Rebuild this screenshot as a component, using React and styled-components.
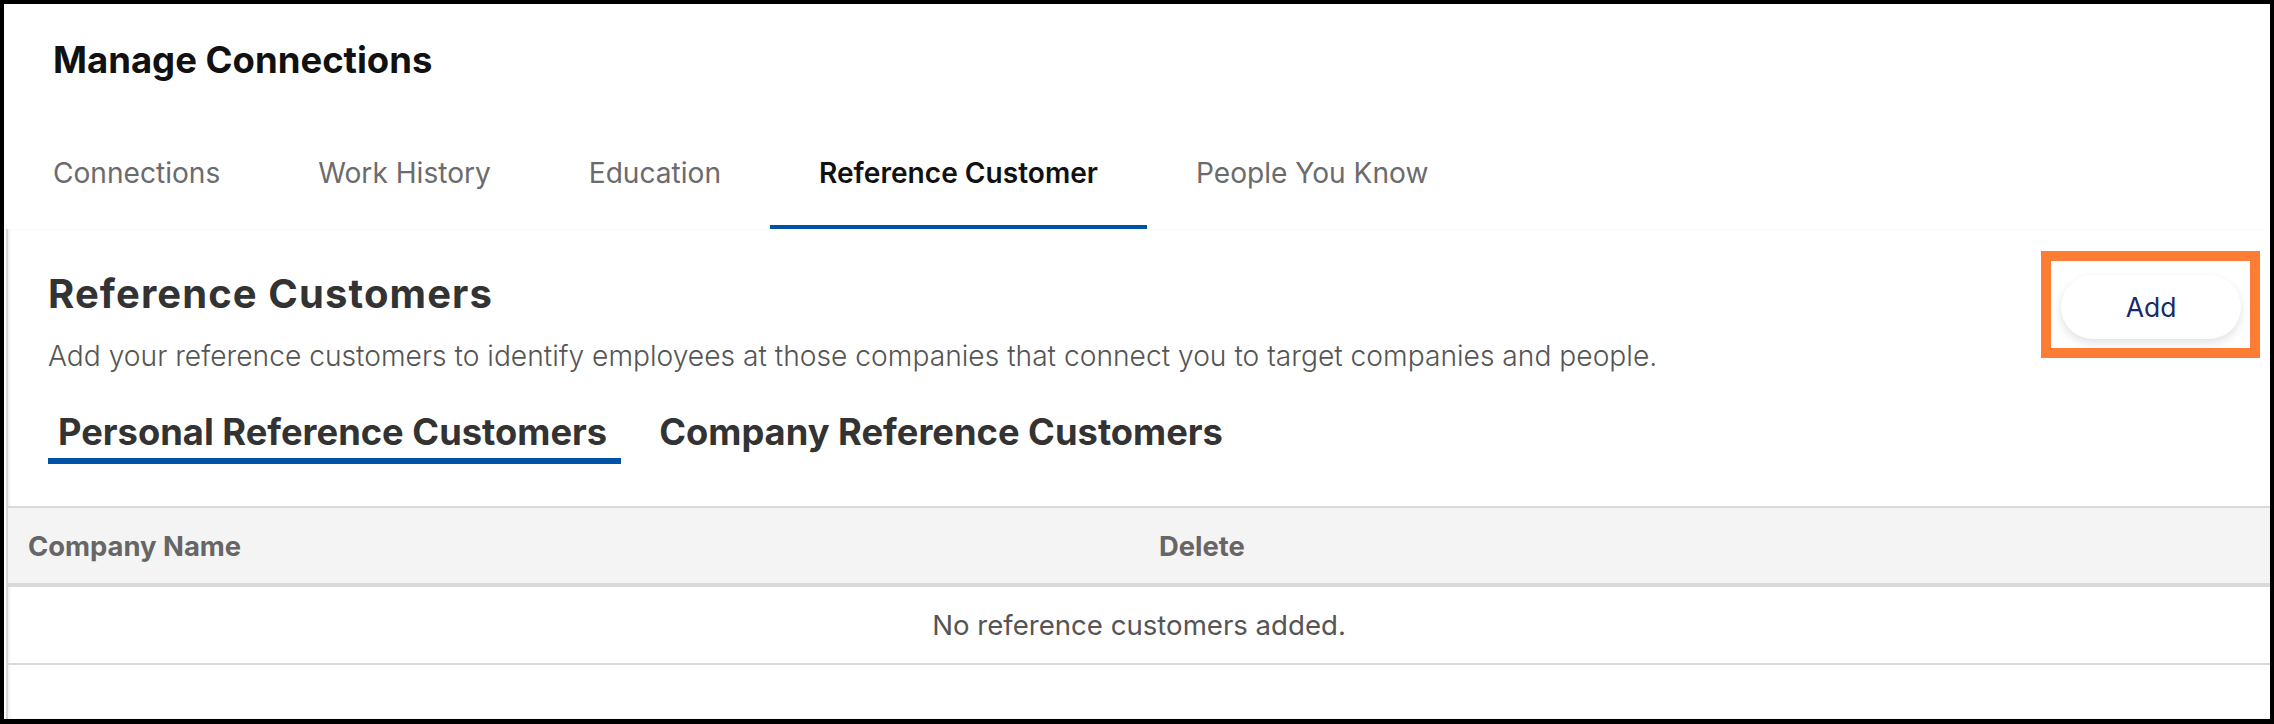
import React, { useState } from 'react';
import styled, { createGlobalStyle } from 'styled-components';

const GlobalStyle = createGlobalStyle`
  * { box-sizing: border-box; }
  body {
    margin: 0;
    background: #fff;
    font-family: Inter, "Noto Sans", sans-serif;
  }
`;

const mainTabs = ['Connections', 'Work History', 'Education', 'Reference Customer', 'People You Know'];
const subTabs = ['Personal Reference Customers', 'Company Reference Customers'];

const App = () => {
  const [tab, setTab] = useState(3);
  const [subTab, setSubTab] = useState(0);

  return (
    <>
      <GlobalStyle />
      <Frame>
        <PageTitle>Manage Connections</PageTitle>
        <TabBar>
          {mainTabs.map((label, i) => (
            <Tab key={label} active={i === tab} onClick={() => setTab(i)}>
              {label}
            </Tab>
          ))}
        </TabBar>
        <Panel>
          <Intro>
            <TopRow>
              <div>
                <Heading>Reference Customers</Heading>
                <Description>
                  Add your reference customers to identify employees at those companies that connect you to target companies and people.
                </Description>
              </div>
              <Highlight>
                <AddButton>Add</AddButton>
              </Highlight>
            </TopRow>
            <SubTabBar>
              {subTabs.map((label, i) => (
                <SubTab key={label} active={i === subTab} onClick={() => setSubTab(i)}>
                  {label}
                </SubTab>
              ))}
            </SubTabBar>
          </Intro>
          <Table>
            <HeadRow>
              <HeadCell>Company Name</HeadCell>
              <HeadCell>Delete</HeadCell>
            </HeadRow>
            <EmptyRow>No reference customers added.</EmptyRow>
          </Table>
        </Panel>
      </Frame>
    </>
  );
};

export default App;

const Frame = styled.div`
  width: 2274px;
  height: 724px;
  border: 4px solid #000;
  border-bottom-width: 5px;
  background: #fff;
  overflow: hidden;
  display: flex;
  flex-direction: column;
`;

const PageTitle = styled.h1`
  margin: 0;
  padding: 38px 0 0 49px;
  font-size: 36.5px;
  line-height: 36.5px;
  font-weight: 700;
  color: #111;
`;

const TabBar = styled.div`
  display: flex;
  margin-top: 50px;
  padding-left: 0;
`;

const Tab = styled.div`
  padding: 30px 49px 38px;
  font-size: 28.1px;
  line-height: 28px;
  font-weight: ${p => (p.active ? 600 : 400)};
  color: ${p => (p.active ? '#111' : '#6b6b6d')};
  border-bottom: 4px solid ${p => (p.active ? '#0052a8' : 'transparent')};
  cursor: pointer;
  white-space: nowrap;
`;

const Panel = styled.div`
  flex: 1;
  margin-left: 2px;
  border-left: 2px solid #d8d8d8;
  box-shadow: inset 2px 0 3px rgba(0, 0, 0, 0.05);
  padding-top: 22px;
`;

const Intro = styled.div`
  padding: 0 10px 0 40px;
`;

const TopRow = styled.div`
  display: flex;
  justify-content: space-between;
  align-items: flex-start;
`;

const Heading = styled.h2`
  margin: 23.4px 0 0;
  font-size: 40px;
  line-height: 40px;
  font-weight: 700;
  letter-spacing: 1.1px;
  color: #333;
`;

const Description = styled.p`
  margin: 28.4px 0 0;
  font-size: 28.2px;
  line-height: 28px;
  font-weight: 300;
  color: #555;
`;

const Highlight = styled.div`
  border: 10px solid #ff7c35;
  padding: 14px 9px 9px 10px;
`;

const AddButton = styled.button`
  width: 180px;
  height: 64px;
  border: none;
  border-radius: 32px;
  background: #fff;
  box-shadow: 0 4px 10px rgba(0, 0, 0, 0.12);
  font-family: Inter, sans-serif;
  font-size: 26.5px;
  color: #172a68;
  cursor: pointer;
`;

const SubTabBar = styled.div`
  display: flex;
  gap: 28px;
  margin-top: 44px;
`;

const SubTab = styled.div`
  padding: 0 14px 8px 10px;
  font-size: 36.3px;
  line-height: 36px;
  font-weight: 700;
  color: #333;
  border-bottom: 6px solid ${p => (p.active ? '#0052a8' : 'transparent')};
  cursor: pointer;
  white-space: nowrap;
`;

const Table = styled.div`
  margin-top: 42px;
  border-top: 2px solid #d9d9d9;
`;

const HeadRow = styled.div`
  display: grid;
  grid-template-columns: 1fr 1fr;
  height: 79px;
  background: #f4f4f4;
  border-bottom: 4px solid #d9d9d9;
`;

const HeadCell = styled.div`
  display: flex;
  align-items: center;
  padding: 0 20px;
  font-size: 27.4px;
  line-height: 28px;
  font-weight: 700;
  color: #666;
`;

const EmptyRow = styled.div`
  height: 78px;
  display: flex;
  align-items: center;
  justify-content: center;
  border-bottom: 2px solid #d9d9d9;
  font-size: 27.6px;
  line-height: 28px;
  color: #555;
`;
